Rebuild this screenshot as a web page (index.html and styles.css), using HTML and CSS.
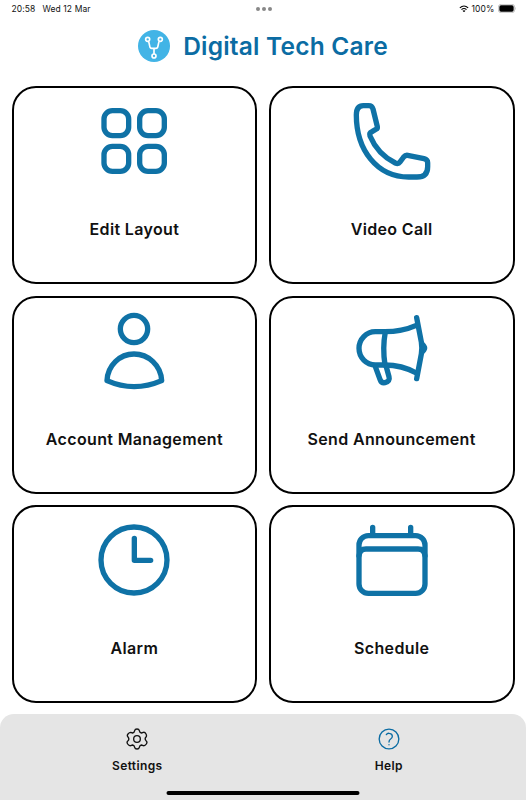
FILE: index.html
```html
<!DOCTYPE html>
<html lang="en">
<head>
    <meta charset="UTF-8">
    <meta name="viewport" content="width=device-width, initial-scale=1.0">
    <title>Digital Tech Care</title>
    <link rel="stylesheet" href="styles.css">
</head>
<body>

    <div class="status-bar">
        <div class="status-left">
            <span>20:58</span>
            <span>Wed 12 Mar</span>
        </div>
        <div class="dots"><i></i><i></i><i></i></div>
        <div class="status-right">
            <svg class="wifi" viewBox="0 0 30 22">
                <path d="M2.500 8.500Q15-3 27.500 8.500M7.500 13.500Q15 7 22.500 13.500" fill="none" stroke="#000" stroke-width="3.500"/>
                <path d="M10.500 17Q15 13.500 19.500 17L15 21.500Z"/>
            </svg>
            <span>100%</span>
            <svg class="battery" viewBox="0 0 54 27">
                <rect x="1" y="1" width="49" height="25" rx="8" fill="none" stroke="#aaa" stroke-width="2"/>
                <rect x="4" y="4" width="43" height="19" rx="5"/>
                <path d="M52 9Q55 13.500 52 18Z" fill="#aaa"/>
            </svg>
        </div>
    </div>

    <header class="header">
        <svg class="logo" viewBox="0 0 96 96">
            <circle cx="48" cy="48" r="48" fill="#42b4e6"/>
            <g fill="none" stroke="#fff" stroke-width="5">
                <path d="M32 34L36 52Q37 55 41 55H54Q58 55 59 52L63 34M48 55V72"/>
                <circle cx="29" cy="28" r="6"/>
                <circle cx="67" cy="28" r="6"/>
                <circle cx="48" cy="78" r="6"/>
            </g>
        </svg>
        <h1>Digital Tech Care</h1>
    </header>

    <main class="grid">
        <div class="card">
            <svg class="icon" viewBox="-2 0 270 270">
                <rect x="43" y="47" width="74" height="75" rx="25"/>
                <rect x="150" y="47" width="74" height="75" rx="25"/>
                <rect x="43" y="154" width="74" height="75" rx="25"/>
                <rect x="150" y="154" width="74" height="75" rx="25"/>
            </svg>
            <p>Edit Layout</p>
        </div>

        <div class="card">
            <svg class="icon" viewBox="5 0 270 270">
                <path d="M54 32H70Q80 32 83 42L96 95Q97 100 92 103L80 110Q71 114 74 123Q97 178 150 204Q159 208 164 201L175 186Q180 180 187 181L236 191Q247 194 247 203V215Q247 246 215 246H190C95 246 33 165 33 60Q33 32 54 32Z"/>
            </svg>
            <p>Video Call</p>
        </div>

        <div class="card">
            <svg class="icon" viewBox="-2 -1 270 270">
                <circle cx="133" cy="71" r="41"/>
                <path d="M52 226C54 180 90 146 133 146S214 180 216 226Q133 262 52 226Z"/>
            </svg>
            <p>Account Management</p>
        </div>

        <div class="card">
            <svg class="icon" viewBox="5 -1 270 270">
                <path d="M213 60Q170 79 118 79H90A49 50 0 0 0 90 179H118Q170 179 213 203"/>
                <path d="M120 79Q111 128 119 179"/>
                <path d="M214 37L228 110Q231 128 228 146L214 220"/>
                <path d="M90 184L104 222Q108 234 119 232Q135 228 131 214L123 185"/>
                <path class="fill" d="M229 104Q246 118 246 128T229 152Z"/>
            </svg>
            <p>Send Announcement</p>
        </div>

        <div class="card">
            <svg class="icon" viewBox="-3 -3 270 270">
                <circle cx="132" cy="135" r="99"/>
                <path d="M133 70V136H182"/>
            </svg>
            <p>Alarm</p>
        </div>

        <div class="card">
            <svg class="icon" viewBox="5 -3 270 270">
                <rect x="41" y="62" width="198" height="173" rx="28"/>
                <path d="M41 122Q43 102 62 102H218Q237 102 239 122M82 37V60M196 37V60"/>
            </svg>
            <p>Schedule</p>
        </div>
    </main>

    <nav class="tab-bar">
        <div class="tab">
            <svg viewBox="0 0 66 66" fill="none" stroke="#111" stroke-width="4" stroke-linejoin="round">
                <path d="M26 8Q27 3 33 3T40 8Q41 14 46 15Q49 14 52 13Q57 12 60 18T60 27Q55 32 60 38Q65 42 61 48T52 53Q49 52 46 51Q41 52 40 58Q39 63 33 63T26 58Q25 52 20 51Q17 52 14 53Q9 54 5 48T6 38Q11 33 6 27Q2 23 6 18T14 13Q17 14 20 15Q25 14 26 8Z"/>
                <circle cx="33" cy="33" r="10"/>
            </svg>
            <span>Settings</span>
        </div>
        <div class="tab">
            <svg viewBox="0 0 66 66" fill="none" stroke="#0b6ca3" stroke-width="4" stroke-linecap="round">
                <circle cx="33" cy="33" r="29.500"/>
                <path d="M25 20Q28 15 34 16Q43 17 43 25Q43 30 38 33Q33 36 33 42"/>
                <path d="M33 50V50.500"/>
            </svg>
            <span>Help</span>
        </div>
        <div class="home-indicator"></div>
    </nav>

</body>
</html>
```
FILE: styles.css
```css
* {
    box-sizing: border-box;
}

body {
    margin: 0;
    height: 800px;
    display: flex;
    flex-direction: column;
    font-family: Inter, "Liberation Sans", sans-serif;
    background-color: #fff;
    color: #111;
    overflow: hidden;
}

.status-bar {
    height: 17px;
    padding: 0 10.5px 0 11.5px;
    display: grid;
    grid-template-columns: 1fr auto 1fr;
    align-items: center;
    font-size: 8.5px;
    letter-spacing: 0.1px;
}

.status-left,
.status-right {
    display: flex;
    align-items: center;
}

.status-left {
    gap: 7px;
}

.status-right {
    justify-content: flex-end;
    gap: 3px;
}

.wifi {
    width: 10px;
    height: 7.5px;
}

.battery {
    width: 18px;
    height: 9px;
}

.dots {
    display: flex;
    gap: 2px;
}

.dots i {
    width: 4px;
    height: 4px;
    border-radius: 50%;
    background-color: #888;
}

.header {
    height: 69px;
    padding-top: 12px;
    display: flex;
    justify-content: center;
    align-items: flex-start;
    gap: 13px;
}

.logo {
    width: 32px;
    height: 32px;
    margin-top: 1px;
}

h1 {
    margin: 0;
    font-size: 24.5px;
    font-weight: 600;
    line-height: 34px;
    letter-spacing: 0.2px;
    color: #0b6ca3;
}

.grid {
    display: grid;
    grid-template-columns: 1fr 1fr;
    grid-auto-rows: 198px;
    gap: 11.5px;
    padding: 0 11.5px;
}

.card {
    border: 2px solid #000;
    border-radius: 24px;
    padding-top: 7px;
    display: flex;
    flex-direction: column;
    align-items: center;
}

.card p {
    margin: 34px 0 0;
    font-size: 16px;
    font-weight: 600;
    line-height: 20px;
    letter-spacing: 0.35px;
}

.icon {
    width: 90px;
    height: 90px;
    fill: none;
    stroke: #0f72a6;
    stroke-width: 16;
    stroke-linecap: round;
    stroke-linejoin: round;
}

.icon .fill {
    fill: #0f72a6;
    stroke: none;
}

.tab-bar {
    position: relative;
    height: 86px;
    margin-top: auto;
    padding: 13.5px 11.5px 0;
    display: flex;
    background-color: #e5e5e5;
    border-radius: 14px 14px 0 0;
}

.tab {
    flex: 1;
    display: flex;
    flex-direction: column;
    align-items: center;
    gap: 8.5px;
    font-size: 12px;
    font-weight: 600;
    line-height: 16px;
    letter-spacing: 0.35px;
}

.tab svg {
    width: 22px;
    height: 22px;
}

.home-indicator {
    position: absolute;
    left: 50%;
    bottom: 5.5px;
    width: 193px;
    height: 4px;
    border-radius: 2px;
    background-color: #000;
    transform: translateX(-50%);
}
```
